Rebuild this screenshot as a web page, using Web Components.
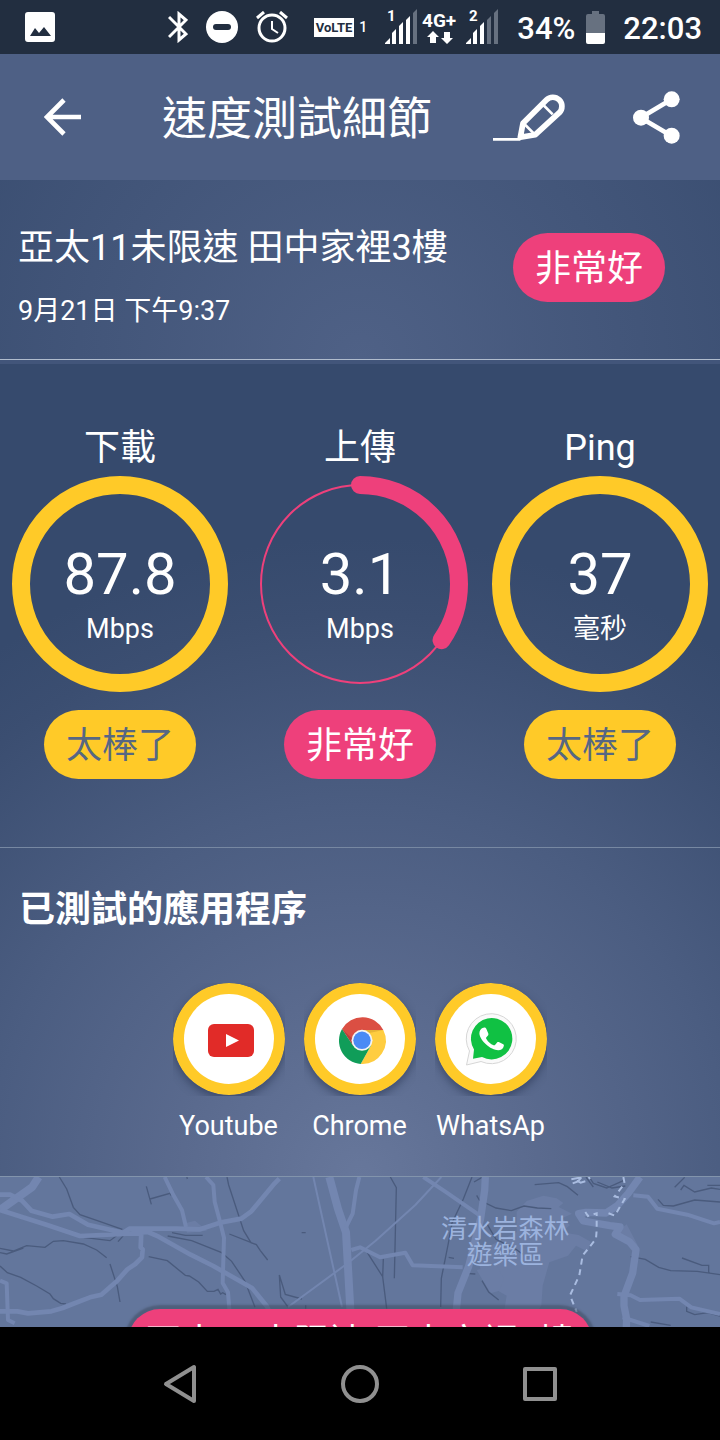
<!DOCTYPE html>
<html lang="zh-Hant">
<head>
<meta charset="utf-8">
<meta name="viewport" content="width=device-width, initial-scale=1">
<title>速度測試細節</title>
<style>
  body {
    background-color: #000;
    color: #fff;
    display: flex;
    flex-direction: column;
    font-family: Roboto, "Noto Sans CJK TC", sans-serif;
    margin: 0;
    min-height: 100vh;
  }

  main {
    display: flex;
    flex: 1;
    flex-direction: column;
  }

  .details {
    background: radial-gradient(circle 640px at 50% 100%, #67779b 0%, #5a6a8e 28%, #4b5d81 58%, #3b4e71 88%, #364a6d 100%);
  }

  .gauges {
    border-bottom: 1px solid #7788a2;
    display: grid;
    grid-template-columns: repeat(3, 1fr);
    padding: 62px 0 68px;
  }

  .apps {
    border-bottom: 1px solid #8294ac;
    padding: 40px 20px 32px 19px;
  }

  .apps h2 {
    font-size: 36px;
    font-weight: 700;
    line-height: 44px;
    margin: 0 0 51px;
  }

  .app-list {
    display: flex;
    gap: 19px;
    justify-content: center;
  }
</style>
</head>
<body>
  <status-bar></status-bar>
  <app-bar>速度測試細節</app-bar>
  <main>
    <test-summary>
      亞太11未限速 田中家裡3樓
      <span slot="date">9月21日 下午9:37</span>
      <rating-badge slot="rating" level="good">非常好</rating-badge>
    </test-summary>
    <div class="details">
      <section class="gauges">
        <speed-gauge level="great" value="100">
          <span slot="label">下載</span>
          87.8
          <span slot="unit">Mbps</span>
          <rating-badge slot="rating" level="great">太棒了</rating-badge>
        </speed-gauge>
        <speed-gauge level="good" value="34.6">
          <span slot="label">上傳</span>
          3.1
          <span slot="unit">Mbps</span>
          <rating-badge slot="rating" level="good">非常好</rating-badge>
        </speed-gauge>
        <speed-gauge level="great" value="100">
          <span slot="label">Ping</span>
          37
          <span slot="unit">毫秒</span>
          <rating-badge slot="rating" level="great">太棒了</rating-badge>
        </speed-gauge>
      </section>
      <section class="apps">
        <h2>已測試的應用程序</h2>
        <div class="app-list">
          <tested-app icon="youtube">Youtube</tested-app>
          <tested-app icon="chrome">Chrome</tested-app>
          <tested-app icon="whatsapp">WhatsAp</tested-app>
        </div>
      </section>
    </div>
    <location-map>亞太11未限速 田中家裡3樓</location-map>
  </main>
  <nav-bar></nav-bar>

<script>
// attaches an open shadow root filled with the given markup
function render(element, html) {
  const template = document.createElement('template');
  template.innerHTML = html;
  element.attachShadow({ mode: 'open' });
  element.shadowRoot.appendChild(template.content.cloneNode(true));
}

// <status-bar> phone status icons, battery and clock
class StatusBar extends HTMLElement {
  constructor() {
    super();
    render(this, `
      <style>
        :host {
          align-items: center;
          background-color: #222e40;
          display: flex;
          font-size: 31px;
          font-weight: 500;
          height: 54px;
          justify-content: space-between;
          line-height: 36px;
          padding: 0 18px 0 25px;
        }

        svg {
          display: block;
        }

        .icons,
        .battery,
        .volte {
          align-items: center;
          display: flex;
        }

        .icons {
          gap: 18px;
        }

        .battery {
          gap: 11px;
        }

        .text {
          padding-top: 4px;
        }

        .volte {
          font-size: 14px;
          gap: 5px;
          margin-left: 8px;
        }

        .volte b {
          background-color: #fff;
          color: #222e40;
          font-size: 13px;
          line-height: 19px;
          padding: 0 2px;
        }
      </style>
      <svg width="30" height="30" viewBox="0 0 30 30">
        <path fill="#fff" fill-rule="evenodd" d="M3 0h24a3 3 0 0 1 3 3v24a3 3 0 0 1-3 3H3a3 3 0 0 1-3-3V3a3 3 0 0 1 3-3zM5 24h21l-7-9-5 6-4-5z"/>
      </svg>
      <div class="icons">
        <svg width="20" height="32" viewBox="0 0 20 32" fill="none" stroke="#fff" stroke-width="3">
          <path d="M1 6l17 17-7 6V3l7 6L1 26"/>
        </svg>
        <svg width="32" height="32" viewBox="0 0 32 32">
          <circle cx="16" cy="16" r="16" fill="#fff"/>
          <rect x="7" y="13" width="18" height="6" rx="3" fill="#222e40"/>
        </svg>
        <svg width="32" height="32" viewBox="0 0 32 32" fill="none" stroke="#fff" stroke-width="3">
          <circle cx="16" cy="17" r="13"/>
          <path d="M1 7l7-6M31 7l-7-6"/>
          <path stroke-width="2" d="M16 10v8l6 4"/>
        </svg>
        <div class="volte"><b>VoLTE</b><span>1</span></div>
        <svg width="114" height="44" viewBox="0 -4 114 44" fill="#fff" font-weight="700">
          <text x="2" y="12" font-size="15">1</text>
          <path d="M0 35v-1l5-5v6zM7 35V24l4-4v15zM14 35V17l4-4v22zM21 35V11l4-4v28z"/>
          <path fill="#677180" d="M28 35V4l4-4v35z"/>
          <text x="37" y="18" font-size="19">4G+</text>
          <path d="M48 22l6 6h-3v6h-6v-6h-3zM62 35l-6-6h3v-6h6v6h3z"/>
          <text x="84" y="12" font-size="15">2</text>
          <path d="M81 35v-1l5-5v6zM88 35V24l4-4v15zM95 35V17l4-4v22z"/>
          <path fill="#677180" d="M102 35V11l4-4v28zM109 35V4l4-4v35z"/>
        </svg>
        <div class="battery">
          <span class="text">34%</span>
          <svg width="19" height="33" viewBox="0 0 19 33">
            <path fill="#677180" d="M6 0h7v3h4a2 2 0 0 1 2 2v18H0V5a2 2 0 0 1 2-2h4z"/>
            <path fill="#fff" d="M0 22h19v9a2 2 0 0 1-2 2H2a2 2 0 0 1-2-2z"/>
          </svg>
        </div>
        <span class="text">22:03</span>
      </div>
    `);
  }
}

// <app-bar> back button, page title and page actions
class AppBar extends HTMLElement {
  constructor() {
    super();
    render(this, `
      <style>
        :host {
          align-items: center;
          background-color: #4e6085;
          display: flex;
          height: 126px;
          padding: 0 40px 0 44px;
        }

        button {
          background: none;
          border: 0;
          cursor: pointer;
          padding: 0;
        }

        svg {
          display: block;
          fill: none;
          stroke: #fff;
          stroke-width: 14;
        }

        h1 {
          flex: 1;
          font-size: 45px;
          font-weight: 400;
          line-height: 56px;
          margin: 0 0 0 80px;
          padding-top: 5px;
        }

        .actions {
          align-items: center;
          display: flex;
          gap: 68px;
        }
      </style>
      <button aria-label="返回">
        <svg width="38" height="38" viewBox="0 0 114 114">
          <path d="M111 57H12M60 6L9 57l51 51"/>
        </svg>
      </button>
      <h1><slot></slot></h1>
      <div class="actions">
        <button aria-label="編輯">
          <svg width="72" height="52" viewBox="0 0 216 156" stroke-linejoin="round">
            <path stroke-width="17" d="M82 139L90 97l70-70a26 26 0 0 1 39 38l-72 66z"/>
            <path stroke-width="8" d="M94 99l32 32M151 42l28 28M0 145h82"/>
          </svg>
        </button>
        <button aria-label="分享">
          <svg width="47" height="53" viewBox="0 0 141 159">
            <path d="M116 25L23 80l93 55"/>
            <g fill="#fff" stroke="none">
              <circle cx="116" cy="25" r="24"/>
              <circle cx="24" cy="80" r="24"/>
              <circle cx="116" cy="134" r="24"/>
            </g>
          </svg>
        </button>
      </div>
    `);
  }
}

// <rating-badge level="good|great">
class RatingBadge extends HTMLElement {
  constructor() {
    super();
    render(this, `
      <style>
        :host {
          background-color: #ee407b;
          border-radius: 35px;
          color: #fff;
          display: inline-block;
          font-size: 36px;
          line-height: 65px;
          padding: 4px 22px 0;
          white-space: nowrap;
        }

        :host([level="great"]) {
          background-color: #ffca28;
          color: #566783;
        }
      </style>
      <slot></slot>
    `);
  }
}

// <test-summary> name, date and overall rating
class TestSummary extends HTMLElement {
  constructor() {
    super();
    render(this, `
      <style>
        :host {
          background: radial-gradient(circle 540px at 50% 100%, #4f6186 0%, #364a6d 100%);
          border-bottom: 1px solid #b0bccd;
          box-shadow: 0 4px #42557a;
          display: flex;
          justify-content: space-between;
          margin-bottom: 4px;
          padding: 46px 55px 30px 18px;
        }

        h2 {
          font-size: 36px;
          font-weight: 400;
          line-height: 44px;
          margin: 0;
        }

        p {
          font-size: 27px;
          line-height: 36px;
          margin: 23px 0 0;
        }

        .rating {
          margin-top: 7px;
        }
      </style>
      <div>
        <h2><slot></slot></h2>
        <p><slot name="date"></slot></p>
      </div>
      <div class="rating"><slot name="rating"></slot></div>
    `);
  }
}

// <speed-gauge level="good|great" value="0-100">
class SpeedGauge extends HTMLElement {
  constructor() {
    super();
    render(this, `
      <style>
        :host {
          --gauge-color: #ee407b;
          align-items: center;
          display: flex;
          flex-direction: column;
        }

        :host([level="great"]) {
          --gauge-color: #ffca28;
        }

        .label {
          font-size: 36px;
          line-height: 44px;
          margin-bottom: 6px;
        }

        .dial {
          display: grid;
          margin-bottom: 18px;
        }

        .dial > * {
          grid-area: 1 / 1;
        }

        svg {
          display: block;
          fill: none;
          stroke: var(--gauge-color);
        }

        .arc {
          stroke-linecap: round;
          stroke-width: 18;
        }

        .reading {
          padding-top: 68px;
          text-align: center;
        }

        .value {
          font-size: 58px;
          line-height: 60px;
        }

        .unit {
          font-size: 27px;
          line-height: 36px;
          margin-top: 7px;
        }
      </style>
      <div class="label"><slot name="label"></slot></div>
      <div class="dial">
        <svg width="216" height="216" viewBox="0 0 216 216">
          <circle cx="108" cy="108" r="99" stroke-width="2"/>
          <circle class="arc" cx="108" cy="108" r="99" pathLength="100" transform="rotate(-90 108 108)"/>
        </svg>
        <div class="reading">
          <div class="value"><slot></slot></div>
          <div class="unit"><slot name="unit"></slot></div>
        </div>
      </div>
      <slot name="rating"></slot>
    `);
  }

  connectedCallback() {
    const value = this.getAttribute('value');
    this.shadowRoot.querySelector('.arc').setAttribute('stroke-dasharray', `${value} 100`);
  }
}

const APP_ICONS = {
  youtube: `
    <rect x="35" y="41" width="46" height="33" rx="6" fill="#e12b28"/>
    <path d="M53 51v13l13-6.500z" fill="#fff"/>`,
  chrome: `
    <path d="M38 46A23.500 23.500 0 0 1 79.300 47H58L49 62.500z" fill="#db4f43"/>
    <path d="M79.300 47A23.500 23.500 0 0 1 56.700 81L67 62.600 58 47z" fill="#ffcd40"/>
    <path d="M56.700 81A23.500 23.500 0 0 1 38 46L49 62.500 67 62.600z" fill="#109d59"/>
    <path d="M58 47h21.300l-14 3z" fill="#d9a52f" opacity=".6"/>
    <path d="M38 46l11 16.500-1-7z" fill="#9c3a35" opacity=".6"/>
    <circle cx="58" cy="57.300" r="10.500" fill="#f4f4f4"/>
    <circle cx="58" cy="57.300" r="8.700" fill="#4a8af5"/>`,
  whatsapp: `
    <path d="M34.500 68A25 25 0 1 1 46 78.500L31.500 82z" fill="#fafafa" stroke="#d6d6d6" stroke-width="1"/>
    <path d="M39 66.500A20.700 20.700 0 1 1 47 74L38 75.800z" fill="#10c143"/>
    <path d="M47.500 45c1.700-.9 3.200-.6 3.800.8l2 4.600c.4 1.200-.1 1.900-1.900 3.900-.5.6-.4 1 0 1.600 2 3.200 4 4.900 7.200 6.300.7.3 1.100.2 1.600-.4l1.900-2.400c.5-.6 1-.6 1.700-.3l4.400 2.200c.7.400.8.900.6 1.800-.6 3-3.200 4.300-5.700 4.200-3.300-.2-8.500-2.200-12.700-6.500-4.400-4.500-6-8-6-10.600 0-2.400 1.400-4.300 3.100-5.200z" fill="#fff"/>`
};

// <tested-app icon="youtube|chrome|whatsapp">
class TestedApp extends HTMLElement {
  constructor() {
    super();
    render(this, `
      <style>
        :host {
          align-items: center;
          display: flex;
          flex-direction: column;
          font-size: 27px;
          gap: 12px;
          line-height: 36px;
          width: 112px;
        }

        .shade {
          height: 113px;
          overflow: hidden;
        }

        svg {
          border-radius: 50%;
          box-shadow: 0 4px 8px rgba(30, 42, 70, .5);
          display: block;
        }
      </style>
      <div class="shade">
        <svg width="112" height="112" viewBox="0 0 112 112">
          <circle cx="56" cy="56" r="56" fill="#ffca28"/>
          <circle cx="56" cy="56" r="45" fill="#fff"/>
          <g class="icon"></g>
        </svg>
      </div>
      <slot></slot>
    `);
  }

  connectedCallback() {
    this.shadowRoot.querySelector('.icon').innerHTML = APP_ICONS[this.getAttribute('icon')];
  }
}

// <location-map> street map with the name of the test pinned on it
class LocationMap extends HTMLElement {
  constructor() {
    super();
    render(this, `
      <style>
        :host {
          background-color: #63769c;
          display: block;
          flex: 1;
          min-height: 150px;
          overflow: hidden;
          position: relative;
        }

        svg {
          display: block;
          height: 100%;
          left: 0;
          position: absolute;
          top: 0;
          width: 100%;
        }

        .roads {
          fill: none;
          stroke: #7386b0;
          stroke-linejoin: round;
        }

        .rivers {
          fill: none;
          stroke: #4a5b7d;
          stroke-width: 4;
        }

        .border {
          fill: none;
          stroke: #a9bce0;
          stroke-dasharray: 18 14;
          stroke-width: 6;
        }

        .place {
          fill: #9cb3de;
          font-size: 77px;
          text-anchor: middle;
        }

        .pin {
          background-color: #ee407b;
          border-radius: 32px;
          box-shadow: 0 0 2px 4px rgba(60, 72, 92, .5);
          font-size: 36px;
          left: 50%;
          line-height: 44px;
          padding: 12px 17px;
          position: absolute;
          top: 132px;
          transform: translateX(-50%);
          white-space: nowrap;
        }
      </style>
      <svg viewBox="0 51 2160 450" preserveAspectRatio="xMidYMin slice">
        <g fill="#6b7da5">
          <path d="M1550 155l30-32 50-16 40 8 20 14-14 12 40 20-30 14 24 20-24 22 50 8 36 20-8 30-36-18-24 30-56 20-20 70-4 60-50 70H1440l70-40 10-60-70-40-20-90 120-60z"/>
          <path d="M1850 215l30-22 34 64-40-10zM555 190l30-8 36 30-60 6zM1430 330l60-14 22 40-14 36-26 8z"/>
        </g>
        <g class="rivers">
          <path d="M178 51l22 36 20 55 20 22 52 18 75 26M439 79l15 54M450 117l60-17 4 7M560 48l2 9M0 265l40 8 40-16 55 5 25-18 30-2 60 10 40 18 30 23M0 278l20 4 50-18M330 312l22 68 8 46M0 318l22 20 40 14 48 26 40 24 10 14 22 14 16 2"/>
          <path d="M250 232l80 10 40-30M354 245l16-18M446 290l56 12 54 44 12 2 28 18 26 28h20l12-6 8 14 6-4 10 6M681 51l5 24 45 137 22 36 16 6 12 18 22 28M516 218l40 8h52M503 228l72 14 90 36 30 26 40 60 30 78M688 222l66 26M838 345l18 58 50 14M838 345l4 66 22 30M905 218h12M917 436v10"/>
          <path d="M1171 51l18 32-2 90-4 182M1416 51l-26 66-34 72-12 66-20 100-2 86M1346 292l16 3M1422 66l24-14M1430 106l8 14 50 24 46 8 38-14 40 6 42 2M1460 190l28 48 60 30 20 15M1604 74l72-6 26 12 32 26M1758 51l22 30M1770 54l10 16 40 14 50-22M1792 66l44 18 40-6M1396 340l30 2M1446 362l20 34 30 24M1892 290l44 8 40 24 36 10 80 2 68 10M2046 294l60 22h20v26M2024 82l30-30M2042 90l10-14 32 20 50-12 26 4M2122 76h38M1974 118l16 18 30 2 64-18 76 6M1102 278l46 72 12 96M1150 296l-2 56M2060 440v14l24 10 40-6 36 10M1952 486l60 10"/>
        </g>
        <g class="roads">
          <path stroke-width="24" d="M116 51L96 82 0 150M988 51l26 96 24 70 16 284"/>
          <path stroke-width="14" d="M0 104h30l36 18 28 30 64 18 50-8 56 32 106 24 18-12h142l70 2 60-20 64-12 30-22 70-84 14-14M0 150l144 46 96 32 130-6 74-6 32 14 96 54 68 34 116 66 44 54 30 60M424 216l-2 46 6 6-2 24-20 20-24 16-30 34-48 42-34 8-52 20-30 12-34 10-70 6-32-6H0"/>
          <path stroke-width="12" d="M494 51l24 50 28 50 12 50M618 51l22 24 4 50 16 60 12 48-4 136 16 28 8 100M1078 51l-10 40-10 70-20 40M1054 270l26-8 60 30 76-14 22 38 150 6M0 362l20 8 4 110 20 10M1270 51l66 44 90 62 20 14M1900 106l44 4 28 36 90 18 80 26 18-4M1852 402l40 4 28 14 118-4 36 26 86 20M1868 472l80 26"/>
          <path stroke-width="22" d="M1456 51l-2 40-12 84-36 144-32 80-10 102M1920 51l-36 50-32 36-34 22-60-2-22 4 14 22 80 14 30 4-14 22 42 22 20 24-10 70-26 70v28l8 40-4 90"/>
          <path stroke-width="6" d="M940 51l44 200 42 190M1324 51l-78 84-120 108-82 66-180 132"/>
        </g>
        <path class="border" d="M1870 51l4 20-30 38 30 8-30 50-30-12M1756 156l8 12 26-8v50l-2 26-20 26-20 24-10 60-28 60 20 50"/>
        <path stroke="#a9bce0" stroke-width="6" fill="none" d="M1714 58l30-6M1718 70l16-6 10-12M1730 62l12 6 14-4M1766 51l4 6"/>
        <text class="place" x="1516" y="234">清水岩森林</text>
        <text class="place" x="1516" y="313">遊樂區</text>
      </svg>
      <div class="pin"><slot></slot></div>
    `);
  }
}

// <nav-bar> back, home and recent apps
class NavBar extends HTMLElement {
  constructor() {
    super();
    render(this, `
      <style>
        :host {
          background-color: #000;
          display: grid;
          grid-template-columns: repeat(3, 1fr);
          height: 113px;
          padding: 0 12.5%;
        }

        button {
          align-items: center;
          background: none;
          border: 0;
          cursor: pointer;
          display: flex;
          justify-content: center;
          padding: 0;
        }

        svg {
          fill: none;
          stroke: #909090;
          stroke-linejoin: round;
          stroke-width: 4;
        }
      </style>
      <button aria-label="返回">
        <svg width="40" height="40" viewBox="0 0 40 40"><path d="M6 20L34 3v34z"/></svg>
      </button>
      <button aria-label="主畫面">
        <svg width="40" height="40" viewBox="0 0 40 40"><circle cx="20" cy="20" r="17"/></svg>
      </button>
      <button aria-label="最近使用">
        <svg width="40" height="40" viewBox="0 0 40 40"><path d="M5 5h30v30H5z"/></svg>
      </button>
    `);
  }
}

customElements.define('status-bar', StatusBar);
customElements.define('app-bar', AppBar);
customElements.define('rating-badge', RatingBadge);
customElements.define('test-summary', TestSummary);
customElements.define('speed-gauge', SpeedGauge);
customElements.define('tested-app', TestedApp);
customElements.define('location-map', LocationMap);
customElements.define('nav-bar', NavBar);
</script>
</body>
</html>
